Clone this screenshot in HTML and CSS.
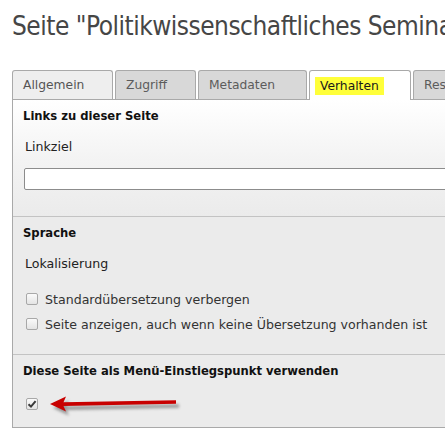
FILE: index.html
```html
<!DOCTYPE html>
<html lang="de">
<head>
<meta charset="utf-8">
<title>Seite</title>
<link rel="stylesheet" href="styles.css">
</head>
<body>
<h1 class="page-title">Seite "Politikwissenschaftliches Seminar"</h1>
<div class="tabs">
  <div class="tab tab-first">Allgemein</div>
  <div class="tab tab-access">Zugriff</div>
  <div class="tab tab-meta">Metadaten</div>
  <div class="tab tab-active"><span class="mark">Verhalten</span></div>
  <div class="tab">Ressourcen</div>
</div>
<div class="panel">
  <section class="section section-first">
    <h2 class="section-title">Links zu dieser Seite</h2>
    <div class="label">Linkziel</div>
    <div class="text-input"></div>
  </section>
  <section class="section section-lang">
    <h2 class="section-title">Sprache</h2>
    <div class="label">Lokalisierung</div>
    <div class="check-row check-row-first"><span class="checkbox"></span><span>Standardübersetzung verbergen</span></div>
    <div class="check-row"><span class="checkbox"></span><span>Seite anzeigen, auch wenn keine Übersetzung vorhanden ist</span></div>
  </section>
  <section class="section section-menu">
    <h2 class="section-title">Diese Seite als Menü-Einstiegspunkt verwenden</h2>
    <div class="check-row check-row-menu">
      <span class="checkbox checked"><svg width="10" height="10" viewBox="0 0 10 10"><path d="M1.5 5.2 L4 7.6 L8.6 2.2" fill="none" stroke="#3a3a3a" stroke-width="2"/></svg></span>
      <svg class="arrow" width="150" height="24" viewBox="0 0 150 24">
        <defs>
          <filter id="sh" x="-10%" y="-50%" width="130%" height="250%">
            <feGaussianBlur stdDeviation="1.8"/>
          </filter>
        </defs>
        <g transform="translate(3,4)" opacity="0.55" filter="url(#sh)">
          <path d="M0 10 L16 2.5 L13.5 8.3 L126 6.3 L126 9.8 L13.5 12 L16 17.5 Z" fill="#555"/>
        </g>
        <path d="M0 10 L16 2.5 L13.5 8.3 L126 6.3 L126 9.8 L13.5 12 L16 17.5 Z" fill="#c80000"/>
      </svg>
    </div>
  </section>
</div>
</body>
</html>
```
FILE: styles.css
```css
html, body {
  margin: 0;
  padding: 0;
  background: #fff;
  overflow: hidden;
}
body {
  width: 445px;
  height: 442px;
  font-family: Verdana, "DejaVu Sans", sans-serif;
  font-size: 12px;
  color: #1a1a1a;
}
.page-title {
  margin: 0;
  padding: 9px 0 0 12px;
  height: 70px;
  box-sizing: border-box;
  font-family: "DejaVu Sans Condensed", "Liberation Sans Narrow", sans-serif;
  font-weight: normal;
  font-size: 26px;
  letter-spacing: -0.5px;
  line-height: 34px;
  color: #464646;
  white-space: nowrap;
  overflow: hidden;
}
.tabs {
  display: flex;
  gap: 2px;
  padding-left: 12px;
  height: 29px;
  white-space: nowrap;
}
.tab {
  flex: none;
  box-sizing: border-box;
  height: 29px;
  padding: 0 10px;
  border: 1px solid #a9a9a9;
  border-bottom: none;
  border-radius: 3px 3px 0 0;
  background: #d8d8d8;
  color: #5c5c5c;
  font-size: 12.3px;
  line-height: 28px;
}
.tab-first {
  background: #eeeeee;
  color: #555;
  width: 101px;
}
.tab-access { width: 81px; }
.tab-meta { width: 109px; }
.tab-active {
  width: 102px;
  background: #fff;
  height: 30px;
  padding: 0 5px;
  position: relative;
  z-index: 1;
  color: #1a1a1a;
}
.mark {
  display: inline-block;
  background: #ffff3a;
  line-height: 18px;
  padding: 0 5px;
  margin-top: 6px;
  vertical-align: top;
}
.panel {
  width: 470px;
  margin-left: 12px;
  border: 1px solid #a9a9a9;
  background: #ebebeb;
}
.section {
  padding: 8px 10px 0;
}
.section-first {
  height: 116px;
  box-sizing: border-box;
  background: linear-gradient(#ffffff 0px, #f3f3f3 60px, #ebebeb 116px);
}
.section-lang {
  border-top: 1px solid #c3c3c3;
  height: 138px;
  box-sizing: border-box;
}
.section-menu {
  border-top: 1px solid #c3c3c3;
  padding-bottom: 15px;
}
.section-title {
  margin: 0;
  font-family: Tahoma, "DejaVu Sans", sans-serif;
  font-size: 11.6px;
  font-weight: bold;
  line-height: 16px;
  color: #111;
}
.label {
  margin-top: 14px;
  padding-left: 2px;
  line-height: 18px;
  font-size: 12.6px;
  color: #222;
}
.text-input {
  margin: 12px 0 0 1px;
  height: 22px;
  box-sizing: border-box;
  border: 1px solid #8c8c8c;
  border-radius: 2px;
  background: #fff;
}
.check-row {
  display: flex;
  align-items: center;
  gap: 7px;
  height: 16px;
  padding-left: 3px;
  font-size: 12.6px;
  color: #333;
  white-space: nowrap;
}
.check-row-first {
  margin-top: 18px;
  margin-bottom: 9px;
}
.check-row-menu {
  margin-top: 17px;
  position: relative;
}
.checkbox {
  box-sizing: border-box;
  width: 12px;
  height: 12px;
  flex: none;
  border: 1px solid #a8a8a8;
  border-radius: 2px;
  background: linear-gradient(#fafafa, #e4e4e4);
  display: flex;
  align-items: center;
  justify-content: center;
}
.arrow {
  position: absolute;
  left: 27px;
  top: -2px;
}
```
